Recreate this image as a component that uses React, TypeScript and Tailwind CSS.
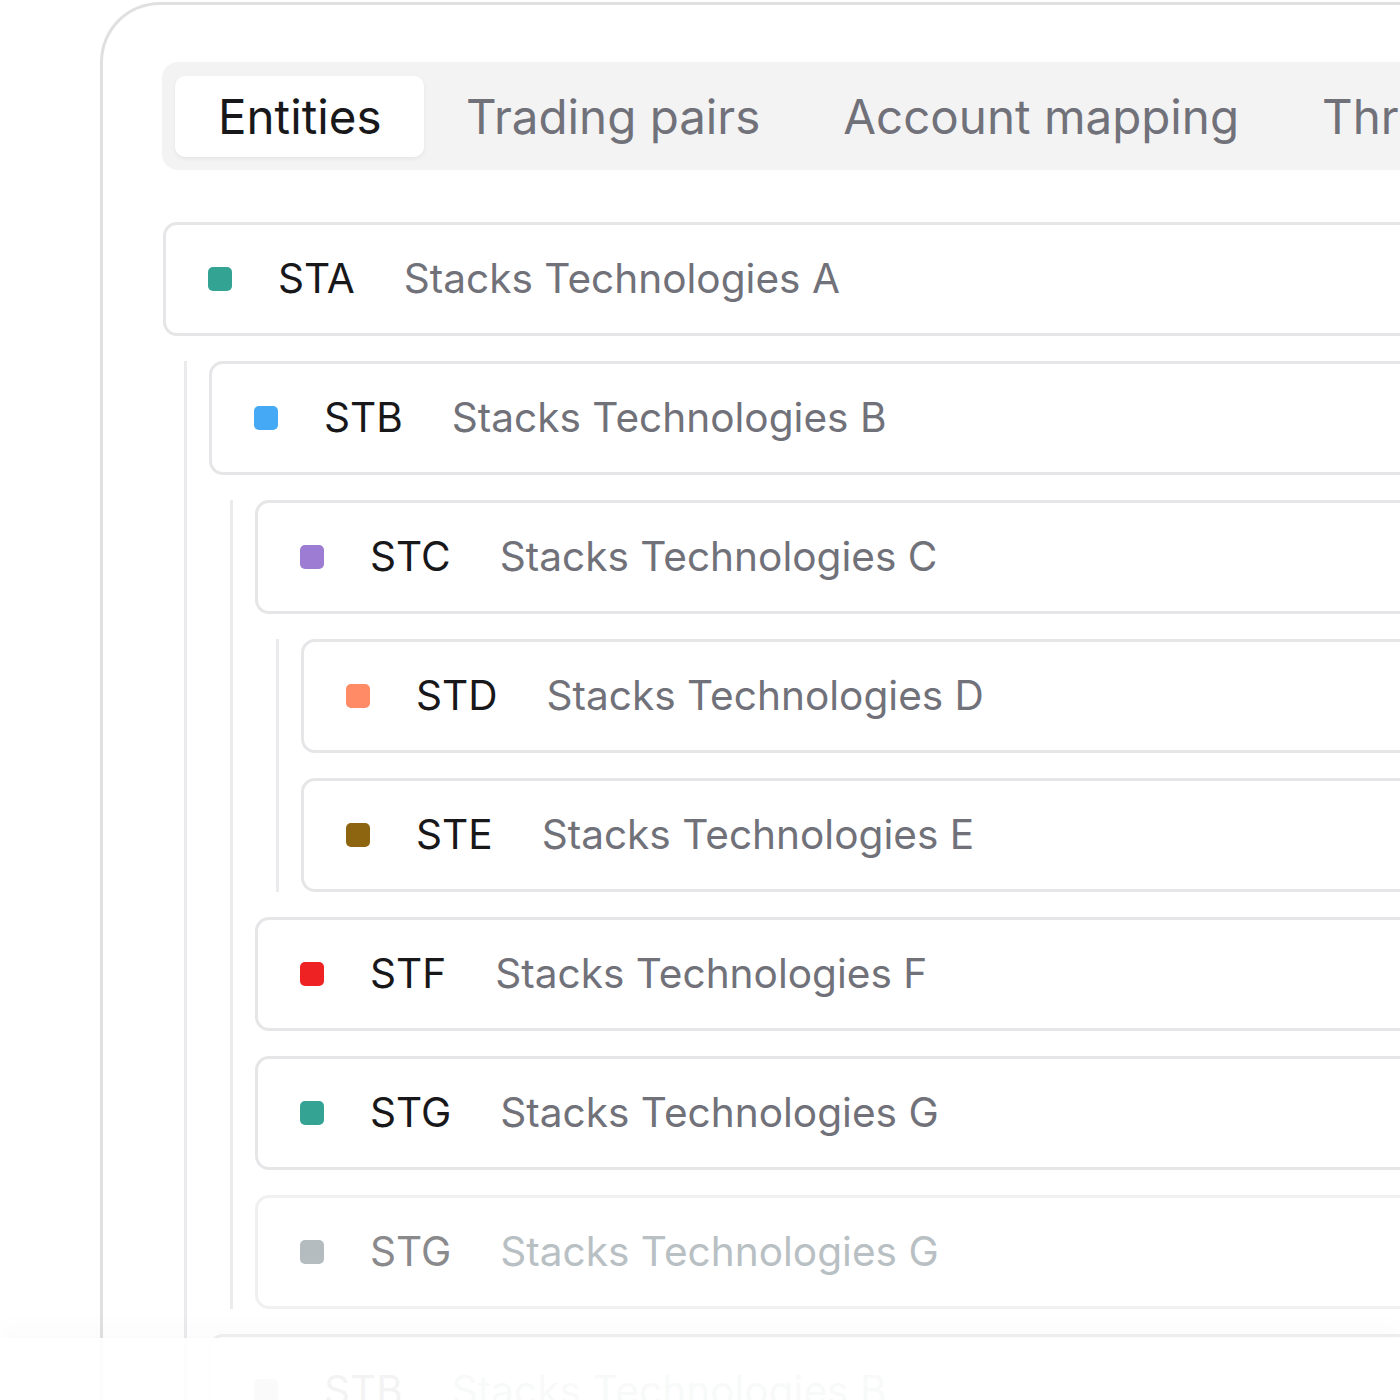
import React from "react";

type Entity = {
  code: string;
  name: string;
  color: string;
  faded?: boolean;
  children?: Entity[];
};

const TREE: Entity = {
  code: "STA",
  name: "Stacks Technologies A",
  color: "bg-[#33a394]",
  children: [
    {
      code: "STB",
      name: "Stacks Technologies B",
      color: "bg-[#45a9f6]",
      children: [
        {
          code: "STC",
          name: "Stacks Technologies C",
          color: "bg-[#9d7dd4]",
          children: [
            { code: "STD", name: "Stacks Technologies D", color: "bg-[#ff8a66]" },
            { code: "STE", name: "Stacks Technologies E", color: "bg-[#8d640f]" },
          ],
        },
        { code: "STF", name: "Stacks Technologies F", color: "bg-[#ee2222]" },
        { code: "STG", name: "Stacks Technologies G", color: "bg-[#34a394]" },
        { code: "STG", name: "Stacks Technologies G", color: "bg-[#b4bcc0]", faded: true },
      ],
    },
    { code: "STB", name: "Stacks Technologies B", color: "bg-[#c9ccd0]", faded: true },
  ],
};

const TABS = ["Entities", "Trading pairs", "Account mapping", "Threshold rules"];

function Row({ entity }: { entity: Entity }) {
  return (
    <div
      className={
        "flex h-[114px] items-center rounded-[14px] border-[3px] bg-white pl-[42px] " +
        (entity.faded ? "border-[#f0f0f1]" : "border-[#e6e6e8]")
      }
    >
      <span className={"h-[24px] w-[24px] shrink-0 rounded-[5px] " + entity.color} />
      <span
        className={
          "ml-[46px] mr-[49px] text-[40.6px] leading-none " +
          (entity.faded ? "text-[#8a8a8c]" : "text-[#18181b]")
        }
      >
        {entity.code}
      </span>
      <span
        className={
          "whitespace-nowrap text-[40.6px] leading-none " +
          (entity.faded ? "text-[#b9c0c4]" : "text-[#71717a]")
        }
      >
        {entity.name}
      </span>
    </div>
  );
}

function Node({ entity }: { entity: Entity }) {
  return (
    <div className="flex flex-col">
      <Row entity={entity} />
      {entity.children && (
        <div className="ml-[21px] mt-[25px] flex flex-col gap-[25px] border-l-[3px] border-[#ebebed] pl-[22px]">
          {entity.children.map((child, i) => (
            <Node key={child.code + i} entity={child} />
          ))}
        </div>
      )}
    </div>
  );
}

export default function App() {
  return (
    <div
      className="relative h-[1400px] w-[1400px] overflow-hidden bg-white"
      style={{ fontFamily: "Inter, 'Noto Sans', sans-serif" }}
    >
      <div className="ml-[100px] mt-[2px] h-[1500px] w-[1500px] rounded-tl-[60px] border-l-[3px] border-t-[3px] border-[#e0e0e0] pl-[59px] pt-[57px]">
        <div className="flex w-max rounded-[16px] bg-[#f3f3f4] pb-[13px] pl-[13px] pr-[13px] pt-[14px]">
          {TABS.map((tab, i) => (
            <div
              key={tab}
              className={
                "flex h-[81px] items-center whitespace-nowrap text-[47.5px] leading-none " +
                (i === 0
                  ? "rounded-[10px] bg-white px-[43px] text-[#18181b] shadow-[0_2px_4px_rgba(0,0,0,0.06)]"
                  : "px-[41.5px] text-[#71717a]")
              }
            >
              {tab}
            </div>
          ))}
        </div>

        <div className="ml-[1px] mt-[52px] w-[1600px]">
          <Node entity={TREE} />
        </div>
      </div>

      {/* fade-out panel at the bottom */}
      <div className="pointer-events-none absolute inset-x-0 bottom-0 top-[1338px] bg-white/90 shadow-[0_-12px_24px_rgba(0,0,0,0.02)]" />
    </div>
  );
}
